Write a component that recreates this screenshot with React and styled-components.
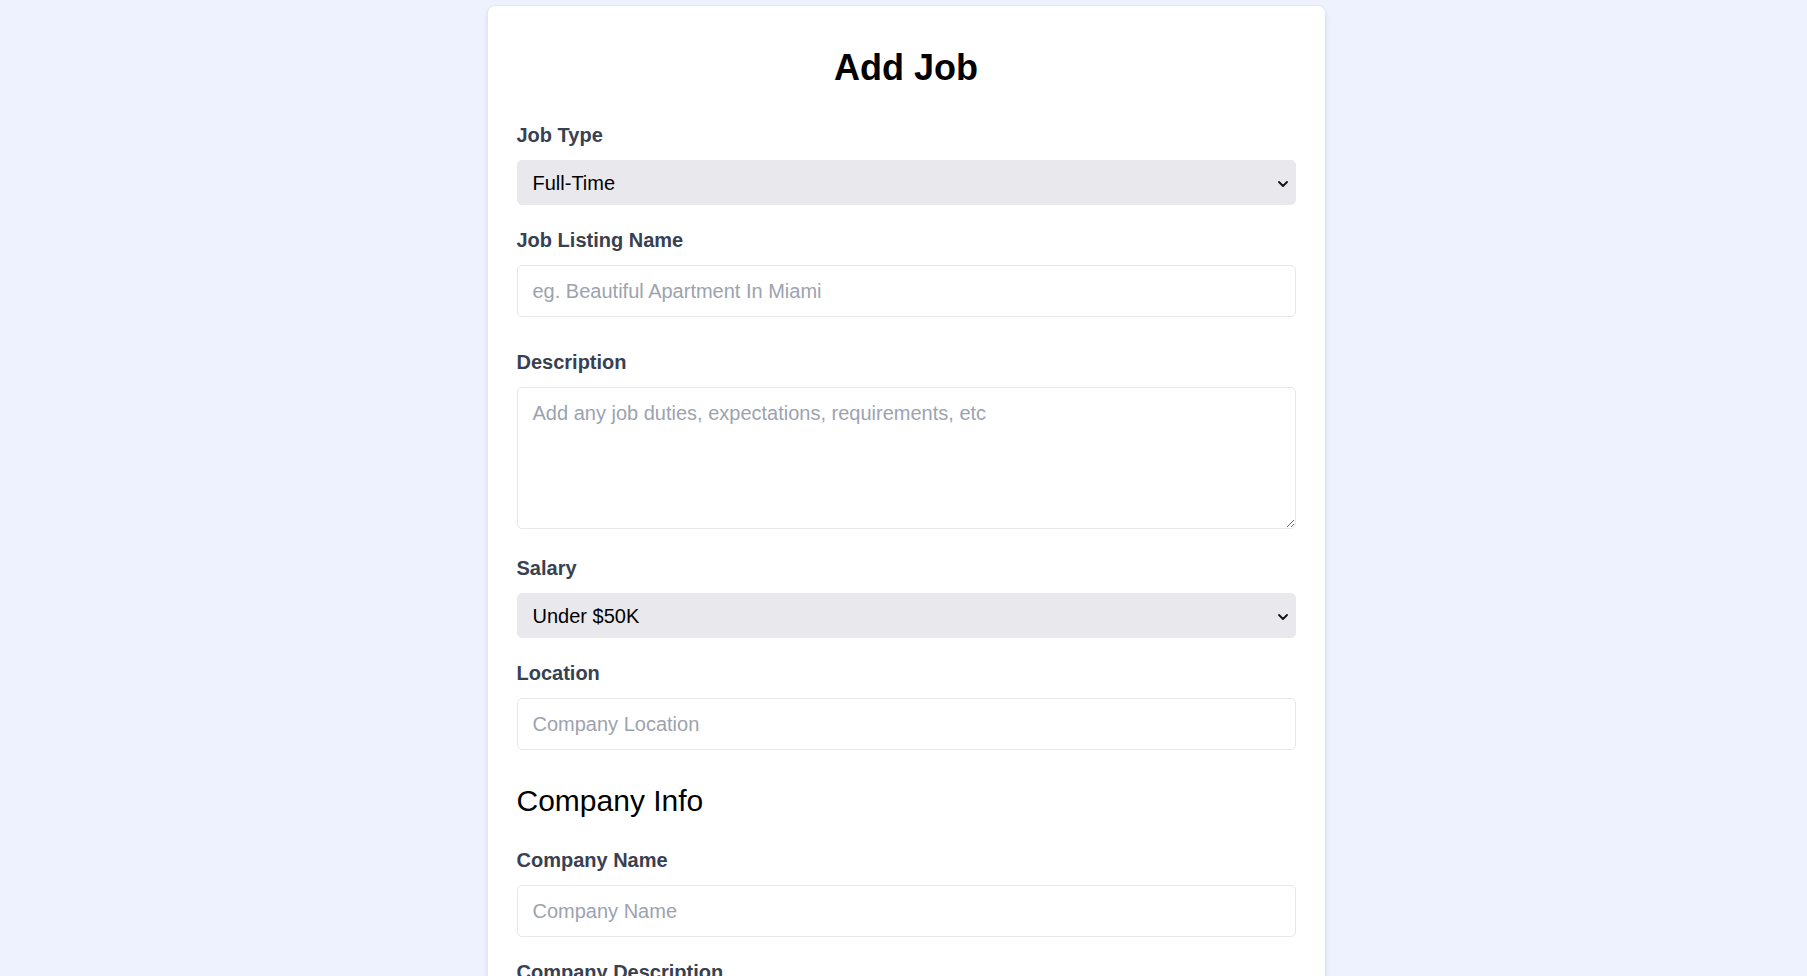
import React from 'react';
import styled, { createGlobalStyle } from 'styled-components';

const GlobalStyle = createGlobalStyle`
  * {
    box-sizing: border-box;
  }

  html,
  body {
    margin: 0;
    padding: 0;
    background-color: #eef2ff;
    font-family: 'Liberation Sans', Arial, sans-serif;
  }
`;

export default function App() {
  return (
    <>
      <GlobalStyle />
      <Page>
        <Card>
          <form onSubmit={(e) => e.preventDefault()}>
            <Title>Add Job</Title>

            <Field>
              <Label htmlFor="type">Job Type</Label>
              <SelectWrap>
                <Select id="type" defaultValue="Full-Time">
                  <option value="Full-Time">Full-Time</option>
                  <option value="Part-Time">Part-Time</option>
                  <option value="Remote">Remote</option>
                  <option value="Internship">Internship</option>
                </Select>
                <Chevron viewBox="0 0 10 6">
                  <path d="M1 1l4 4 4-4" />
                </Chevron>
              </SelectWrap>
            </Field>

            <Field $gap={30}>
              <Label htmlFor="title">Job Listing Name</Label>
              <Input id="title" type="text" placeholder="eg. Beautiful Apartment In Miami" />
            </Field>

            <Field $gap={24}>
              <Label htmlFor="description">Description</Label>
              <TextArea id="description" rows="4" placeholder="Add any job duties, expectations, requirements, etc" />
            </Field>

            <Field>
              <Label htmlFor="salary">Salary</Label>
              <SelectWrap>
                <Select id="salary" defaultValue="Under $50K">
                  <option value="Under $50K">Under $50K</option>
                  <option value="$50K - 60K">$50K - $60K</option>
                  <option value="$60K - 70K">$60K - $70K</option>
                  <option value="Over $200K">Over $200K</option>
                </Select>
                <Chevron viewBox="0 0 10 6">
                  <path d="M1 1l4 4 4-4" />
                </Chevron>
              </SelectWrap>
            </Field>

            <Field $gap={31}>
              <Label htmlFor="location">Location</Label>
              <Input id="location" type="text" placeholder="Company Location" />
            </Field>

            <SectionTitle>Company Info</SectionTitle>

            <Field>
              <Label htmlFor="company">Company Name</Label>
              <Input id="company" type="text" placeholder="Company Name" />
            </Field>

            <Field>
              <Label htmlFor="company_description">Company Description</Label>
              <TextArea id="company_description" rows="4" placeholder="What does your company do?" />
            </Field>

            <Field>
              <Label htmlFor="contact_email">Contact Email</Label>
              <Input id="contact_email" type="email" placeholder="Email address for applicants" />
            </Field>

            <Field>
              <Label htmlFor="contact_phone">Contact Phone</Label>
              <Input id="contact_phone" type="tel" placeholder="Optional phone for applicants" />
            </Field>

            <SubmitButton type="submit">Add Job</SubmitButton>
          </form>
        </Card>
      </Page>
    </>
  );
}

const Page = styled.div`
  display: flex;
  justify-content: center;
  padding: 5px 0 30px 5px;
`;

const Card = styled.div`
  width: 839px;
  background-color: #ffffff;
  border: 1px solid #e5e7eb;
  border-radius: 8px;
  box-shadow: 0 4px 6px -1px rgba(0, 0, 0, 0.1), 0 2px 4px -2px rgba(0, 0, 0, 0.1);
  padding: 39px 29px 40px;
`;

const Title = styled.h2`
  margin: 0 0 30px;
  text-align: center;
  font-size: 36px;
  line-height: 45px;
  font-weight: 700;
  color: #000000;
`;

const SectionTitle = styled.h3`
  margin: 0 0 24px;
  font-size: 30px;
  line-height: 40px;
  font-weight: 400;
  color: #000000;
`;

const Field = styled.div`
  margin-bottom: ${({ $gap }) => ($gap ? `${$gap}px` : '20px')};
`;

const Label = styled.label`
  display: block;
  margin-bottom: 10px;
  font-size: 20px;
  line-height: 30px;
  font-weight: 700;
  color: #374151;
`;

const SelectWrap = styled.div`
  position: relative;
`;

const Select = styled.select`
  display: block;
  width: 100%;
  height: 45px;
  appearance: none;
  -webkit-appearance: none;
  background-color: #e9e9ed;
  border: 1px solid #e9e9ed;
  border-radius: 5px;
  padding: 0 30px 0 15px;
  font-family: 'Liberation Sans', Arial, sans-serif;
  font-size: 20px;
  color: #000000;
  outline: none;
`;

const Chevron = styled.svg`
  position: absolute;
  right: 8px;
  top: 50%;
  width: 10px;
  height: 6px;
  margin-top: -2px;
  pointer-events: none;

  path {
    fill: none;
    stroke: #111111;
    stroke-width: 1.8;
    stroke-linecap: round;
    stroke-linejoin: round;
  }
`;

const Input = styled.input`
  display: block;
  width: 100%;
  height: 52px;
  border: 1px solid #e5e7eb;
  border-radius: 5px;
  padding: 10px 15px;
  font-family: 'Liberation Sans', Arial, sans-serif;
  font-size: 20px;
  line-height: 30px;
  color: #374151;
  outline: none;

  &::placeholder {
    color: #9ca3af;
  }
`;

const TextArea = styled.textarea`
  display: block;
  width: 100%;
  height: 142px;
  border: 1px solid #e5e7eb;
  border-radius: 5px;
  padding: 10px 15px;
  font-family: 'Liberation Sans', Arial, sans-serif;
  font-size: 20px;
  line-height: 30px;
  color: #374151;
  outline: none;

  &::placeholder {
    color: #9ca3af;
  }
`;

const SubmitButton = styled.button`
  display: block;
  width: 100%;
  padding: 10px 20px;
  border: none;
  border-radius: 999px;
  background-color: #4f46e5;
  color: #ffffff;
  font-family: 'Liberation Sans', Arial, sans-serif;
  font-size: 20px;
  font-weight: 700;
  line-height: 30px;
`;
